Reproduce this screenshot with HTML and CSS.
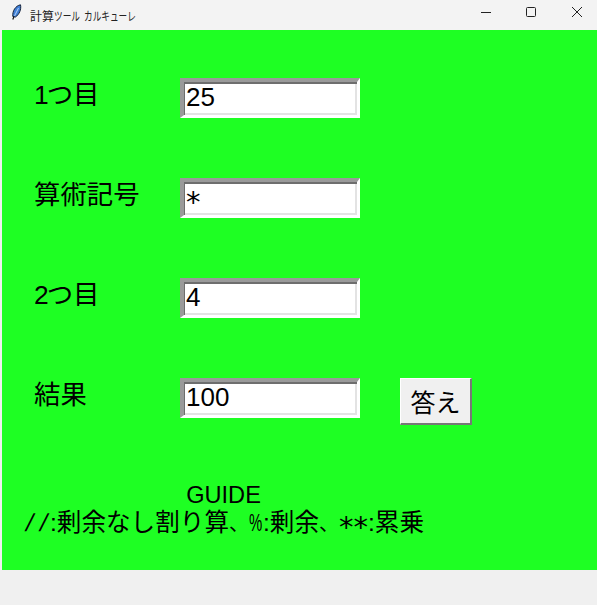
FILE: index.html
```html
<!DOCTYPE html>
<html lang="ja">
<head>
<meta charset="UTF-8" />
<title>計算ツール カルキューレ</title>
<link rel="stylesheet" href="styles.css">
</head>
<body>
<div class="titlebar">
  <svg class="app-icon" width="14" height="22" viewBox="0 0 14 22">
    <path d="M9.5 .8C4.5 1.8 1.2 7 1.8 12.5L4.5 13C8.2 10.5 10.5 5.5 9.5 .8Z" fill="#3f7fd6" stroke="#16233a" stroke-width="1"/>
    <path d="M7.5 4L3.5 12" stroke="#cfe2fa" stroke-width=".8" fill="none"/>
    <path d="M3 12.5L1.8 15.5" stroke="#111" stroke-width="1.2" fill="none"/>
  </svg>
  <span class="title">計算<span class="kana kana-a">ツール</span> <span class="kana kana-b">カルキューレ</span></span>
  <div class="win-buttons">
    <svg class="win-btn" width="46" height="30" viewBox="0 0 46 30"><path d="M22 12.5H32" stroke="#222" fill="none"/></svg>
    <svg class="win-btn" width="46" height="30" viewBox="0 0 46 30"><rect x="21.5" y="7.5" width="9" height="9" rx="1" stroke="#222" fill="none"/></svg>
    <svg class="win-btn" width="46" height="30" viewBox="0 0 46 30"><path d="M21 7L31 17M31 7L21 17" stroke="#222" fill="none"/></svg>
  </div>
</div>

<div class="panel">
  <div class="row">
    <label class="row-label"><span class="num">1</span>つ目</label>
    <div class="entry">25</div>
  </div>
  <div class="row">
    <label class="row-label">算術記号</label>
    <div class="entry"><span class="star">*</span></div>
  </div>
  <div class="row">
    <label class="row-label"><span class="num">2</span>つ目</label>
    <div class="entry">4</div>
  </div>
  <div class="row">
    <label class="row-label">結果</label>
    <div class="entry">100</div>
    <button type="button" class="btn-answer">答え</button>
  </div>
  <div class="guide">
    <span class="guide-title">GUIDE</span><br>
    <span class="slash">/</span><span class="slash">/</span>:剰余なし割り算<span class="comma">、</span><span class="pct">%</span>:剰余<span class="comma">、</span><span class="star">*</span><span class="star">*</span>:累乗
  </div>
</div>
</body>
</html>
```

FILE: styles.css
```css
body {
  margin: 0;
  height: 605px;
  overflow: hidden;
  background: #f0f0f0;
  color: #000;
  font-family: "Liberation Sans", "Noto Sans CJK JP", sans-serif;
}

/* Title bar */
.titlebar {
  display: flex;
  align-items: center;
  height: 30px;
  padding-left: 11px;
  box-sizing: border-box;
  background: #f3f3f3;
}
.app-icon { margin-right: 5px; }
.title {
  font-size: 12px;
  color: #222;
  white-space: nowrap;
}
.kana {
  display: inline-block;
  transform: scaleX(.72);
  transform-origin: left;
}
.kana-a { width: 27px; }
.kana-b { width: 50px; }
.win-buttons {
  display: flex;
  margin-left: auto;
}

/* Green panel */
.panel {
  height: 540px;
  margin-left: 2px;
  padding-top: 48px;
  box-sizing: border-box;
  background: #1eff23;
}
.row {
  display: flex;
  align-items: flex-start;
  height: 100px;
}
.row-label {
  width: 146px;
  margin-left: 32px;
  margin-top: 1px;
  font-size: 26.4px;
  line-height: 32px;
}
.num { letter-spacing: -2px; }

/* Sunken entry */
.entry {
  width: 180px;
  height: 40px;
  box-sizing: border-box;
  padding-left: 2px;
  border-style: solid;
  border-width: 4px 3px 3px 4px;
  border-color: #9a9a9a #ffffff #ffffff #9a9a9a;
  box-shadow: inset 1px 2px 0 #6e6e6e, inset -2px -2px 0 #e3e3e3;
  background: #fff;
  font-size: 26px;
  line-height: 30px;
}

.star {
  font-family: "DejaVu Sans", sans-serif;
  font-size: 29px;
  line-height: 0;
  vertical-align: -6px;
}

.btn-answer {
  width: 72px;
  height: 47px;
  margin-left: 40px;
  padding: 0;
  border-style: solid;
  border-width: 1px 2px 2px 1px;
  border-color: #fff #777 #777 #fff;
  background: #f0f0f0;
  color: #000;
  font-family: inherit;
  font-size: 25px;
}

.guide {
  width: fit-content;
  margin-left: 21px;
  margin-top: 3px;
  text-align: center;
  font-size: 24.6px;
  line-height: 28px;
  white-space: nowrap;
}
.guide-title { font-size: 23.6px; }
.guide .star {
  display: inline-block;
  width: 14.5px;
  vertical-align: -6px;
}
.slash {
  display: inline-block;
  width: 13.5px;
  text-align: center;
  transform: skewX(-13deg);
}
.comma { font-size: 20px; }
.pct {
  display: inline-block;
  width: 14px;
  font-size: 24px;
  transform: scaleX(.62);
  transform-origin: left;
}
```
